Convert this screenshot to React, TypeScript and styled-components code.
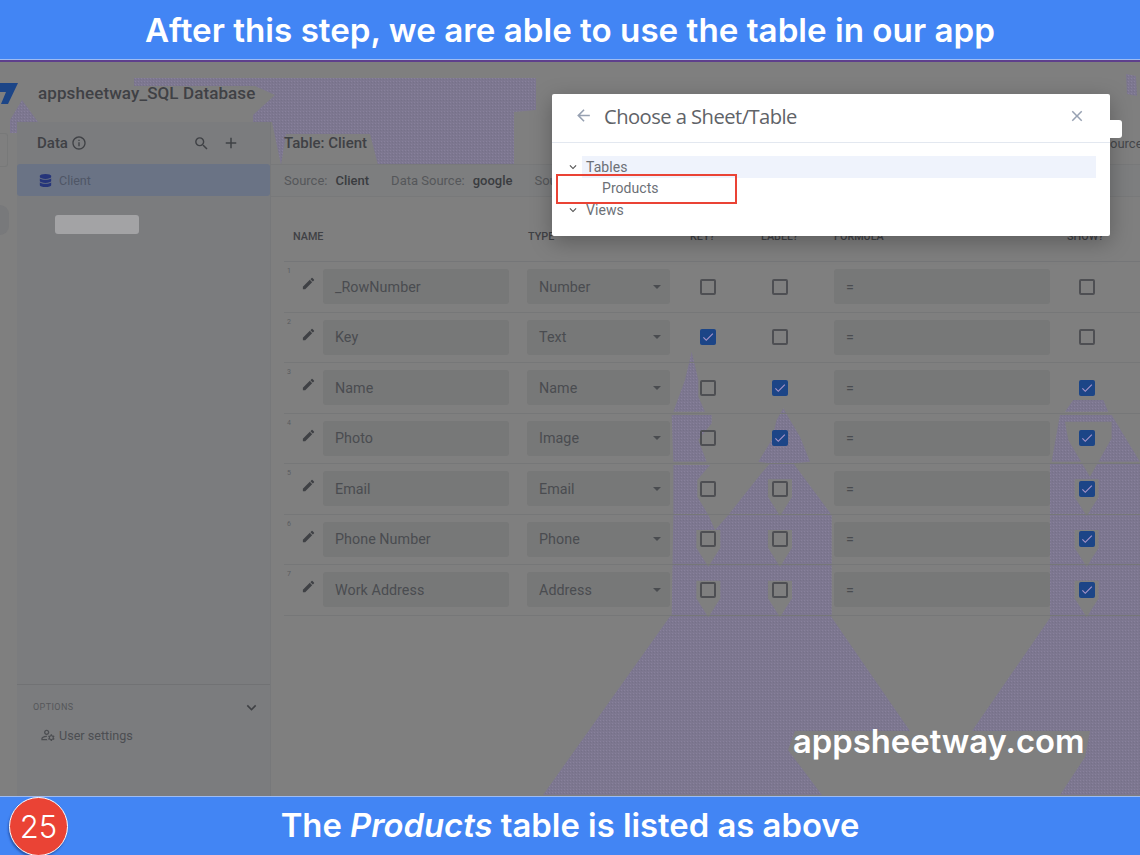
import React from "react";
import styled, { createGlobalStyle } from "styled-components";
import { MdArrowBack, MdClose, MdAdd, MdEdit, MdInfoOutline, MdKeyboardArrowDown, MdOutlineManageAccounts, MdSearch, MdCheck } from "react-icons/md";
import { FaDatabase } from "react-icons/fa";

const Global = createGlobalStyle`
  html, body { margin: 0; padding: 0; background: #7f7f7f; }
  body { font-family: Roboto, "Liberation Sans", sans-serif; }
`;
const Page = styled.div`
  width: 1140px; height: 855px; display: flex; flex-direction: column; overflow: hidden; position: relative; background: #7f7f7f;
`;
const Banner = styled.div<{ $h: number; $size: number; $edge: "top" | "bottom" }>`
  height: ${p => p.$h}px; flex: none; box-sizing: border-box; background: #4285f4; color: #fff; display: flex; align-items: center; justify-content: center;
  font-family: Inter, Roboto, sans-serif; font-weight: 600; font-size: ${p => p.$size}px; position: relative; z-index: 3;
  border-${p => p.$edge}: 1px solid #9dbcf3;
  ${p => (p.$edge === "top" ? "padding-bottom: 2px;" : "")}
  em { font-style: italic; }
`;
const PurpleRule = styled.div`height: 2px; flex: none; background: #5e3f8c; position: relative; z-index: 3;`;
const Shot = styled.div`flex: 1; min-height: 0; display: flex; flex-direction: column; position: relative;`;
const Dither = styled.svg`position: absolute; left: 0; top: 0; width: 1140px; height: 734px;`;
const AppBar = styled.div`height: 60px; flex: none; display: flex; align-items: center; gap: 19px; position: relative;`;
const AppTitle = styled.div`font-size: 17px; font-weight: 500; color: #3f4145; letter-spacing: .1px; position: relative; top: 1px;`;
const Logo = styled.svg`margin-left: -1px; position: relative; top: 2px;`;
const Main = styled.div`flex: 1; display: flex; min-height: 0; position: relative;`;
const Rail = styled.div`width: 17px; flex: none; display: flex; flex-direction: column; align-items: flex-start; padding-top: 11px; box-sizing: border-box; gap: 38px; overflow: hidden;`;
const RailCard = styled.div`width: 8px; height: 34px; border: 1px solid #787979; border-left: 0; border-radius: 0 3px 3px 0; box-sizing: border-box;`;
const RailDot = styled.div`width: 9px; height: 30px; background: #78797b; border-radius: 0 15px 15px 0;`;
const Side = styled.aside`
  width: 253px; flex: none; background: #7b7c7e; display: flex; flex-direction: column; border-right: 1px solid #77787a; box-sizing: content-box;
`;
const SideHead = styled.div`height: 42px; display: flex; align-items: center; padding: 0 30px 0 20px; color: #3f4145; font-size: 15px; font-weight: 500; gap: 3px;`;
const Grow = styled.div`flex: 1;`;
const SideIcons = styled.div`display: flex; gap: 12px; align-items: center;`;
const SideItem = styled.div`height: 32px; background: #6a7385; border-radius: 3px; display: flex; align-items: center; gap: 7px; padding-left: 22px; color: #4f5666; font-size: 12.5px;`;
const Placeholder = styled.div`width: 84px; height: 19px; margin: 19px 0 0 38px; background: #a3a3a5; border-radius: 3px;`;
const Options = styled.div`height: 112px; flex: none; border-top: 1px solid #717274; padding: 15px 9px 0 16px; box-sizing: border-box; color: #4d4f53;`;
const OptHead = styled.div`display: flex; justify-content: space-between; align-items: center; font-size: 9px; letter-spacing: .4px; color: #55575a; height: 12px; position: relative; top: 1px;`;
const OptRow = styled.div`display: flex; align-items: center; gap: 3px; font-size: 12.6px; margin: 15px 0 0 7px; color: #4c4e52;`;
const Content = styled.main`flex: 1; display: flex; flex-direction: column; min-width: 0;`;
const TableHead = styled.div`height: 42px; flex: none; display: flex; align-items: center; padding-left: 13px; font-size: 15px; font-weight: 500; color: #3f4145;`;
const SourceBar = styled.div`height: 33px; flex: none; display: flex; align-items: center; padding-left: 13px; font-size: 13px; color: #55575a; border-top: 1px solid #78797a; border-bottom: 1px solid #78797a; box-sizing: border-box; background: #7d7e7f;
  b { font-weight: 500; color: #3a3c40; margin: 0 22px 0 8px; }
`;
const HeadRow = styled.div`height: 65px; flex: none; display: grid; grid-template-columns: 235px 162px 71px 73px 233px 1fr; align-items: center; padding: 15px 0 0 9px; margin-left: 13px; font-size: 10.8px; color: #3f4145; border-bottom: 1px solid #757678; box-sizing: border-box; font-weight: 500;`;
const Rows = styled.div`margin-left: 13px; display: flex; flex-direction: column;`;
const Row = styled.div`height: 50.5px; flex: none; box-sizing: border-box; border-bottom: 1px solid #767778; position: relative; display: flex; align-items: center;`;
const RowNo = styled.span`position: absolute; left: 3px; top: 5px; font-size: 7px; color: #5a5c60;`;
const PenCell = styled.div`width: 39px; flex: none; display: flex; justify-content: center; padding-left: 9px; box-sizing: border-box; color: #3f4145; position: relative; top: -3px;`;
const Field = styled.div<{ $w: number; $ml: number }>`
  width: ${p => p.$w}px; margin-left: ${p => p.$ml}px; height: 35px; flex: none; background: #777878; border-radius: 3px; box-sizing: border-box;
  padding: 0 10px 0 12px; display: flex; align-items: center; font-size: 14.3px; letter-spacing: .05px; color: #4a4c50; justify-content: space-between;
`;
const Caret = styled.i`width: 0; height: 0; border: 4px solid transparent; border-top: 4px solid #4a4c50; border-bottom: 0; margin-right: -1px;`;
const Box = styled.div<{ $on?: boolean; $ml: number }>`
  width: 16px; height: 16px; box-sizing: border-box; flex: none; margin-left: ${p => p.$ml}px; border-radius: 2px;
  border: ${p => (p.$on ? "none" : "2px solid #4e4f53")}; background: ${p => (p.$on ? "#1c4587" : "transparent")};
  display: flex; align-items: center; justify-content: center; color: #a592c8;
`;
const Dialog = styled.div`
  position: absolute; left: 552px; top: 94px; width: 558px; height: 142px; background: #fff; border-radius: 2px; box-shadow: 0 6px 22px rgba(0,0,0,.28); z-index: 2;
  display: flex; flex-direction: column; color: #6a6f76;
`;
const DialogHead = styled.div`height: 49px; flex: none; display: flex; align-items: center; padding: 0 24px 5px 22px; gap: 11px; border-bottom: 1px solid #e3e8f0; box-sizing: border-box; font-size: 20.2px; color: #5f6368; font-family: "Open Sans", Roboto, sans-serif; letter-spacing: -.55px;`;
const Tree = styled.div`padding-top: 13px; position: relative; font-size: 14px; color: #6c7076;`;
const TreeRow = styled.div<{ $hi?: boolean; $pad: number }>`
  height: 21.5px; display: flex; align-items: center; padding-left: ${p => p.$pad}px; gap: 6px; margin-right: 14px; letter-spacing: .05px;
  background: ${p => (p.$hi ? "linear-gradient(to right, #fff 0 30px, #eff3fc 30px)" : "transparent")};
`;
const RedBox = styled.div`position: absolute; left: 4px; top: 31px; width: 181px; height: 30px; box-sizing: border-box; border: 2px solid #ea4335;`;
const Tab = styled.div`position: absolute; left: 1108px; top: 120px; width: 14px; height: 18px; background: #fff; border-radius: 0 3px 3px 0; z-index: 2;`;
const Clip = styled.div`position: absolute; left: 1110px; top: 74px; font-size: 13px; color: #45474b; width: 30px; overflow: hidden; white-space: nowrap;`;
const Domain = styled.div`position: absolute; left: 793px; top: 721px; font-family: Inter, Roboto, sans-serif; font-size: 32.8px; font-weight: 600; color: #fff; z-index: 2; line-height: 40px;`;
const Badge = styled.div`
  position: absolute; left: 9px; top: 797px; width: 57px; height: 57px; border-radius: 50%; background: #ea4335; border: 1px solid #fff; color: #fff; display: flex; align-items: center; justify-content: center;
  font-size: 31px; z-index: 4; box-shadow: -1px 2px 2px rgba(30,60,130,.6); font-family: Inter, Roboto, sans-serif; font-weight: 300;
`;

const data: [string, string, boolean, boolean, boolean][] = [
  ["_RowNumber", "Number", false, false, false],
  ["Key", "Text", true, false, false],
  ["Name", "Name", false, true, true],
  ["Photo", "Image", false, true, true],
  ["Email", "Email", false, false, true],
  ["Phone Number", "Phone", false, false, true],
  ["Work Address", "Address", false, false, true],
];

const Tick = () => <MdCheck size={14} />;

const halo = (x: number, y: number) =>
  `M${x - 36} ${y - 28} H${x + 36} V${y + 25} L${x} ${y + 82} L${x - 36} ${y + 25}Z`;

function GifBands() {
  return (
    <Dither viewBox="0 62 1140 734" aria-hidden="true">
      <defs>
        <pattern id="dots" width="3" height="3" patternUnits="userSpaceOnUse">
          <rect width="3" height="3" fill="#7d7790" />
          <rect width="1" height="1" fill="#88819c" />
          <rect x="2" y="1" width="1" height="1" fill="#767189" />
        </pattern>
        <mask id="bands" maskUnits="userSpaceOnUse" x="0" y="62" width="1140" height="734">
          <g fill="#fff">
            <path d="M134 78 H536 V110 L514 112 V165 H378 L370 134 H286 L281 165 L272 122 H253 V115 L275 95 L255 86 H134Z" />
            <path d="M22 100 L38 122 L17 122 V133 H10 V120Z" />
            <path d="M1126 74 L1136 76 L1137 96 L1127 94Z" />
            <path d="M671 615 H830 L910 731 H795 L788 750 L822 795 H543Z" />
            <path d="M1052 615 H1140 V795 H1060 L1085 757 L1090 731 H972Z" />
            <g transform="translate(660 360) scale(.3333)">
              <path d="M95 -25 L115 60 L115 110 L135 155 H40 L75 60Z" />
              <path d="M35 165 H155 V190 L115 240 L140 305 H40Z" />
              <path d="M40 315 H150 L112 360 V410 L145 465 H40Z" />
              <path d="M205 465 L300 345 L330 310 L295 305 L335 240 L350 180 L370 145 L390 180 L420 230 L450 305 L400 310 L515 465Z" />
              <path d="M40 465 H145 L165 510 L205 465 H515 V770 H35Z" />
              <path d="M1240 120 H1330 L1345 155 H1215Z" />
              <path d="M1200 165 H1355 L1440 305 H1175Z" />
              <path d="M1170 312 H1440 V770 H1170Z" />
            </g>
          </g>
          <g fill="#000" transform="translate(660 360) scale(.3333)">
            <path d={halo(145, 538)} />
            <path d={halo(145, 690)} />
            <path d={halo(360, 386)} />
            <path d={halo(360, 538)} />
            <path d={halo(360, 690)} />
            <path d="M1215 185 H1355 V235 L1290 350 L1225 240Z" />
            <path d={halo(1280, 386)} />
            <path d={halo(1280, 538)} />
            <path d={halo(1280, 690)} />
          </g>
        </mask>
      </defs>
      <rect x="0" y="62" width="1140" height="734" fill="url(#dots)" mask="url(#bands)" />
    </Dither>
  );
}

export default function App() {
  return (
    <Page>
      <Global />
      <Banner $h={60} $size={33.2} $edge="bottom">After this step, we are able to use the table in our app</Banner>
      <PurpleRule />
      <Shot>
        <GifBands />
        <AppBar>
          <Logo width="20" height="22" viewBox="0 0 20 22"><path d="M0 0H19L9 21H2L7 9H0Z" fill="#1c4587" /></Logo>
          <AppTitle>appsheetway_SQL Database</AppTitle>
        </AppBar>
        <Main>
          <Rail><RailCard /><RailDot /></Rail>
          <Side>
            <SideHead>
              Data <MdInfoOutline size={16} />
              <Grow />
              <SideIcons>
                <MdSearch size={17} />
                <MdAdd size={18} />
              </SideIcons>
            </SideHead>
            <SideItem><FaDatabase size={13} color="#26357a" />Client</SideItem>
            <Placeholder />
            <Grow />
            <Options>
              <OptHead>OPTIONS<MdKeyboardArrowDown size={19} color="#3f4145" /></OptHead>
              <OptRow><MdOutlineManageAccounts size={16} />User settings</OptRow>
            </Options>
          </Side>
          <Content>
            <TableHead>Table: Client</TableHead>
            <SourceBar>Source:<b>Client</b>Data Source:<b>google</b>Source</SourceBar>
            <HeadRow>
              <span>NAME</span><span>TYPE</span><span>KEY?</span><span>LABEL?</span><span>FORMULA</span><span>SHOW?</span>
            </HeadRow>
            <Rows>
              {data.map((r, i) => (
                <Row key={r[0]}>
                  <RowNo>{i + 1}</RowNo>
                  <PenCell><MdEdit size={15} /></PenCell>
                  <Field $w={186} $ml={0}>{r[0]}</Field>
                  <Field $w={143} $ml={18}>{r[1]}<Caret /></Field>
                  <Box $ml={30} $on={r[2]}>{r[2] && <Tick />}</Box>
                  <Box $ml={56} $on={r[3]}>{r[3] && <Tick />}</Box>
                  <Field $w={216} $ml={46}>=</Field>
                  <Box $ml={29} $on={r[4]}>{r[4] && <Tick />}</Box>
                </Row>
              ))}
            </Rows>
          </Content>
        </Main>
        <Clip>ource</Clip>
      </Shot>
      <Banner $h={59} $size={32.8} $edge="top"><span>The <em>Products</em> table is listed as above</span></Banner>
      <Dialog>
        <DialogHead>
          <MdArrowBack size={19} color="#97a1b2" />
          Choose a Sheet/Table
          <Grow />
          <MdClose size={18} color="#97a1b2" />
        </DialogHead>
        <Tree>
          <TreeRow $hi $pad={14}><MdKeyboardArrowDown size={14} color="#555" />Tables</TreeRow>
          <TreeRow $pad={50}>Products</TreeRow>
          <TreeRow $pad={14}><MdKeyboardArrowDown size={14} color="#555" />Views</TreeRow>
          <RedBox />
        </Tree>
      </Dialog>
      <Tab />
      <Domain>appsheetway.com</Domain>
      <Badge>25</Badge>
    </Page>
  );
}
